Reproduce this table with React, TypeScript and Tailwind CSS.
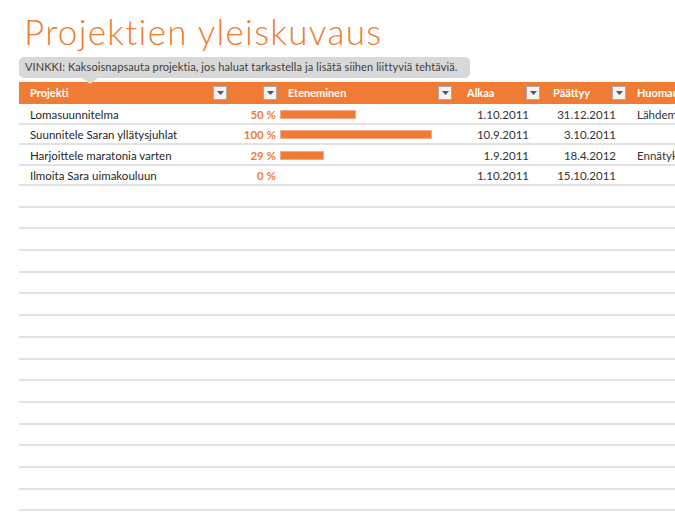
import React from "react";

interface Projekti {
  nimi: string;
  eteneminen: number;
  alkaa: string;
  paattyy: string;
  huomautukset: string;
}

const projektit: Projekti[] = [
  { nimi: "Lomasuunnitelma", eteneminen: 50, alkaa: "1.10.2011", paattyy: "31.12.2011", huomautukset: "Lähdemme lomalle" },
  { nimi: "Suunnitele Saran yllätysjuhlat", eteneminen: 100, alkaa: "10.9.2011", paattyy: "3.10.2011", huomautukset: "" },
  { nimi: "Harjoittele maratonia varten", eteneminen: 29, alkaa: "1.9.2011", paattyy: "18.4.2012", huomautukset: "Ennätyksen rikkominen" },
  { nimi: "Ilmoita Sara uimakouluun", eteneminen: 0, alkaa: "1.10.2011", paattyy: "15.10.2011", huomautukset: "" },
];

const FilterButton = () => (
  <div className="w-[14px] h-[14px] bg-[#f4f4f4] border border-[#a9a9a9] flex items-center justify-center shrink-0">
    <svg width="7" height="4" viewBox="0 0 7 4">
      <path d="M0 0 L7 0 L3.5 4 Z" fill="#555" />
    </svg>
  </div>
);

const BAR_MAX = 152;

const App = () => {
  const tyhjat = Array.from({ length: 16 });

  return (
    <div
      className="w-[675px] h-[520px] overflow-hidden bg-white"
      style={{ fontFamily: "Lato, 'Open Sans', sans-serif" }}
    >
      {/* Otsikko */}
      <h1 className="pl-[24px] pt-[10px] h-[57px] text-[35px] leading-[42px] font-light text-[#f07b30] tracking-[1.3px]">
        Projektien yleiskuvaus
      </h1>

      {/* Vinkki */}
      <div className="relative ml-[19px] w-[451px] h-[21px] rounded-[5px] bg-[#d8d8d8] flex items-center pl-[6px] text-[11px] text-[#404040] tracking-[0.1px]">
        VINKKI: Kaksoisnapsauta projektia, jos haluat tarkastella ja lisätä siihen liittyviä tehtäviä.
        <div className="absolute left-[63px] top-[21px] w-0 h-0 border-l-[8px] border-r-[8px] border-t-[6px] border-l-transparent border-r-transparent border-t-[#d8d8d8]" />
      </div>

      <div className="ml-[19px] mt-[4px] w-[760px]">
        {/* Otsikkorivi */}
        <div className="h-[22px] bg-[#f07b35] flex items-center text-white text-[11px] font-bold">
          <div className="w-[211px] flex items-center justify-between pl-[11px] pr-[3px]">
            <span>Projekti</span>
            <FilterButton />
          </div>
          <div className="w-[50px] flex justify-end pr-[3px]">
            <FilterButton />
          </div>
          <div className="w-[175px] flex items-center justify-between pl-[8px] pr-[3px]">
            <span>Eteneminen</span>
            <FilterButton />
          </div>
          <div className="w-[88px] flex items-center justify-between pl-[12px] pr-[3px]">
            <span>Alkaa</span>
            <FilterButton />
          </div>
          <div className="w-[85px] flex items-center justify-between pl-[10px] pr-[2px]">
            <span>Päättyy</span>
            <FilterButton />
          </div>
          <div className="pl-[9px] whitespace-nowrap">Huomautukset</div>
        </div>

        {/* Rivit */}
        {projektit.map((p) => (
          <div key={p.nimi} className="h-[20.5px] pt-[2px] border-b-2 border-[#e2e2e2] flex items-center text-[11.5px] text-[#1f1f1f]">
            <div className="w-[211px] pl-[11px] whitespace-nowrap">{p.nimi}</div>
            <div className="w-[50px] text-right pr-[4px] font-bold text-[#f07b35]">{p.eteneminen} %</div>
            <div className="w-[175px] flex items-center">
              {p.eteneminen > 0 && (
                <div
                  className="h-[9px] bg-[#f07b35] border border-[#f5a98a]"
                  style={{ width: (p.eteneminen / 100) * BAR_MAX }}
                />
              )}
            </div>
            <div className="w-[74px] text-right text-[#333]">{p.alkaa}</div>
            <div className="w-[87px] text-right text-[#333]">{p.paattyy}</div>
            <div className="pl-[21px] whitespace-nowrap text-[#333]">{p.huomautukset}</div>
          </div>
        ))}

        {tyhjat.map((_, i) => (
          <div key={i} className="h-[21.7px] border-b-2 border-[#e2e2e2]" />
        ))}
      </div>
    </div>
  );
};

export default App;
